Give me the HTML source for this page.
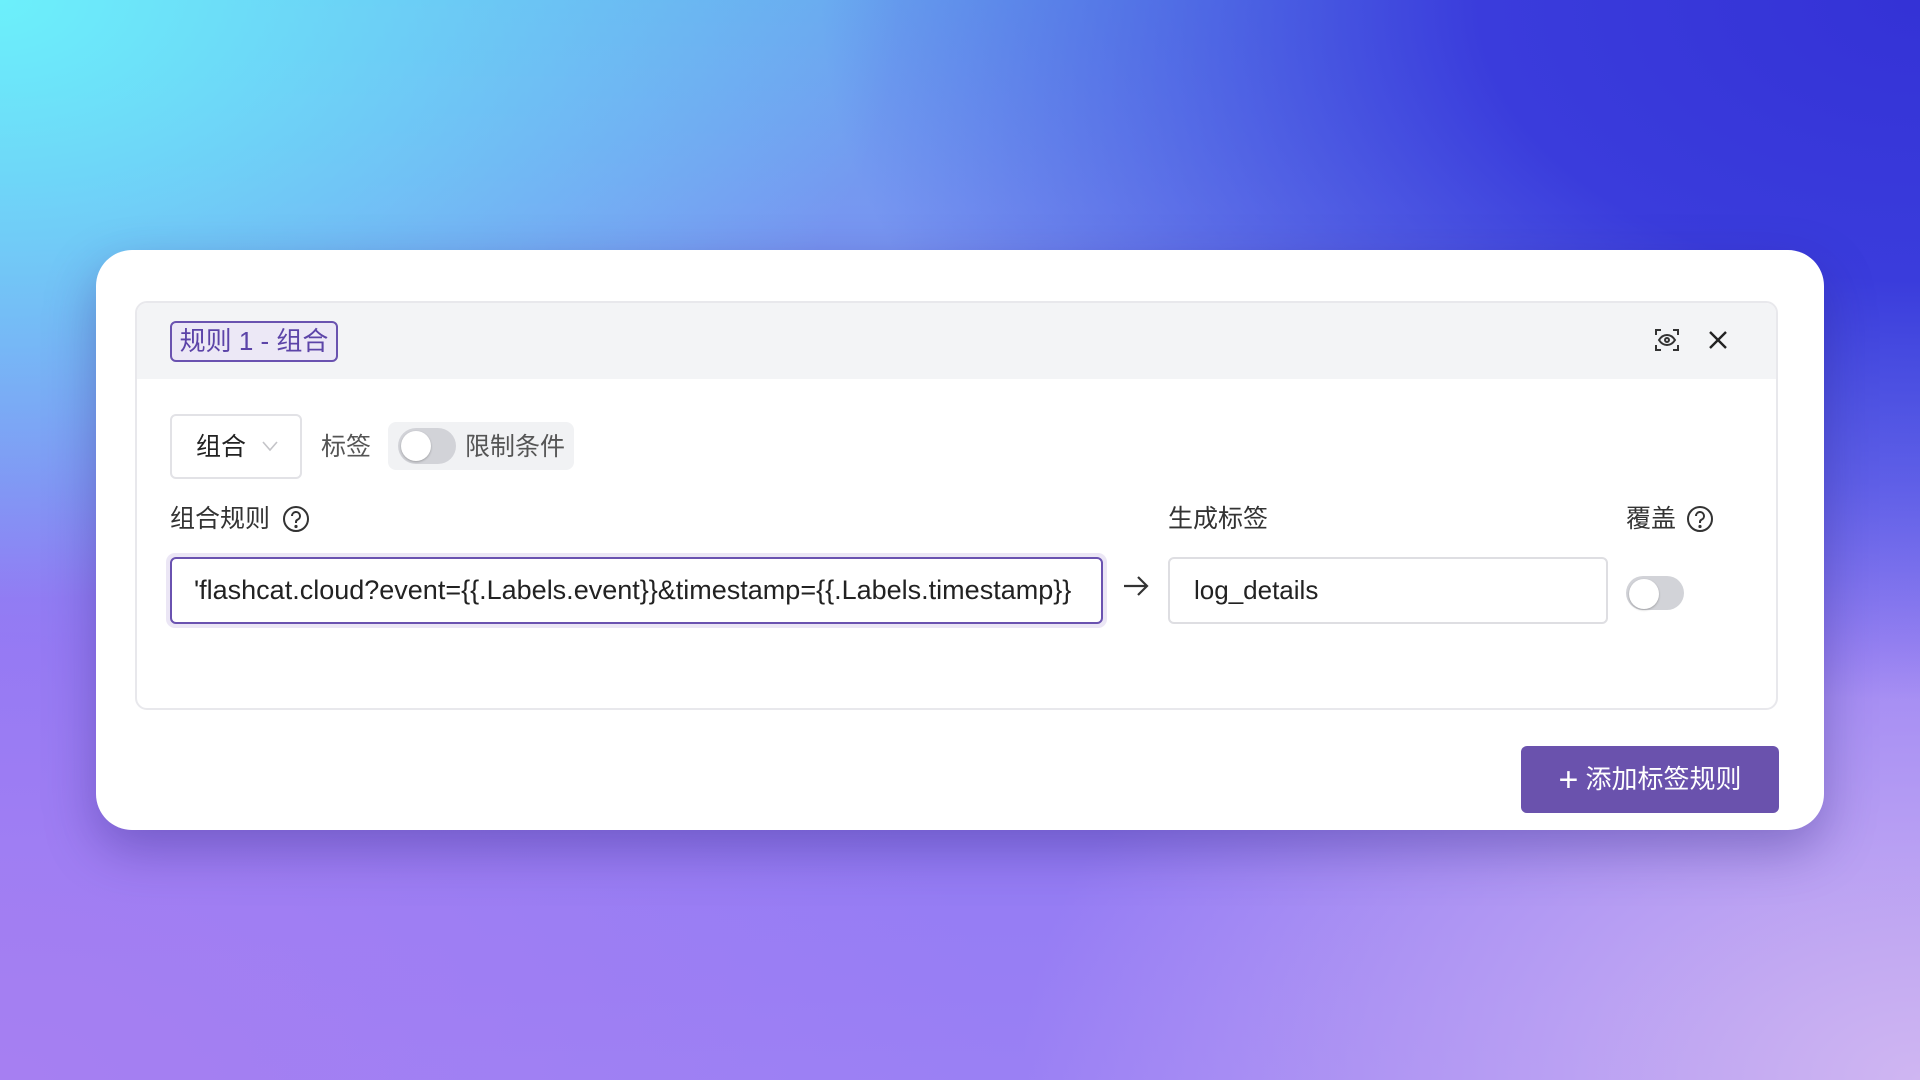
<!DOCTYPE html>
<html><head><meta charset="utf-8"><style>
*{box-sizing:border-box;margin:0;padding:0}
body{width:1920px;height:1080px;overflow:hidden;position:relative;font-family:"Liberation Sans","Noto Sans CJK SC",sans-serif;
background:
radial-gradient(ellipse 900px 600px at 0% 0%,#6cf0fb 0%,rgba(108,240,251,0) 100%),
radial-gradient(ellipse 1100px 700px at 100% 0%,#3432d6 0%,#3a3cdc 40%,rgba(58,60,220,0) 100%),
radial-gradient(ellipse 900px 600px at 100% 100%,#cfb6f2 0%,rgba(207,182,242,0) 100%),
radial-gradient(ellipse 1000px 600px at 0% 100%,#a67ff2 0%,rgba(166,127,242,0) 100%),
linear-gradient(180deg,#6aa6ef 0%,#8f78f4 60%,#9a80f4 100%);}
.card{position:absolute;left:96px;top:250px;width:1728px;height:580px;background:#fff;border-radius:36px;box-shadow:0 20px 50px rgba(40,30,120,.35)}
.panel{position:absolute;left:135px;top:301px;width:1643px;height:409px;border:2px solid #e8e8ec;border-radius:12px;background:#fff;overflow:hidden}
.head{position:absolute;left:0;top:0;right:0;height:76px;background:#f3f4f6}
.tag{position:absolute;left:170px;top:321px;width:168px;height:41px;border:2px solid #6a52b0;border-radius:6px;background:#ece8f6;color:#5c44a8;font-size:26px;line-height:37px;text-align:center}
.t{position:absolute;font-size:25px;color:#333;line-height:30px}
.sel{position:absolute;left:170px;top:414px;width:132px;height:65px;border:2px solid #e2e2e6;border-radius:6px}
.sw{position:absolute;width:58px;height:36px;border-radius:18px;background:#d2d3d8}
.sw::after{content:"";position:absolute;left:3px;top:3px;width:30px;height:30px;border-radius:50%;background:#fff;box-shadow:0 1px 2px rgba(0,0,0,.25)}
.inp{position:absolute;height:67px;border:2px solid #dedee2;border-radius:6px;font-size:25px;color:#222;line-height:63px;padding-left:24px;overflow:hidden;white-space:nowrap;background:#fff}
.btn{position:absolute;left:1521px;top:746px;width:258px;height:67px;background:#6a52ad;border-radius:6px;color:#fff;font-size:26px;line-height:67px;text-align:center}
</style></head><body>
<div class="card"></div>
<div class="panel"><div class="head"></div></div>
<div class="tag">规则 1 - 组合</div>
<svg style="position:absolute;left:1654px;top:327px" width="26" height="26" viewBox="0 0 26 26" fill="none" stroke="#333" stroke-width="2"><path d="M2 8V3h5M19 3h5v5M24 18v5h-5M7 23H2v-5"/><path d="M5 13c2.5-4 5-5 8-5s5.5 1 8 5c-2.5 4-5 5-8 5s-5.5-1-8-5z"/><circle cx="13" cy="13" r="2"/></svg>
<svg style="position:absolute;left:1708px;top:330px" width="20" height="20" viewBox="0 0 20 20" stroke="#222" stroke-width="2.4"><path d="M2 2L18 18M18 2L2 18"/></svg>
<div class="sel"><span class="t" style="left:24px;top:16px;color:#222">组合</span>
<svg style="position:absolute;left:90px;top:24px" width="16" height="12" viewBox="0 0 16 12" fill="none" stroke="#c4c4c8" stroke-width="1.6"><path d="M1 2l7 8 7-8"/></svg></div>
<span class="t" style="left:321px;top:432px;color:#555">标签</span>
<div style="position:absolute;left:388px;top:422px;width:186px;height:48px;background:#f1f2f4;border-radius:8px"></div>
<div class="sw" style="left:398px;top:428px"></div>
<span class="t" style="left:465px;top:432px;color:#555">限制条件</span>
<span class="t" style="left:170px;top:504px">组合规则</span>
<svg style="position:absolute;left:282px;top:505px" width="28" height="28" viewBox="0 0 28 28" fill="none" stroke="#333" stroke-width="2"><circle cx="14" cy="14" r="12"/><path d="M10 11a4 4 0 1 1 5.5 3.7c-1 .5-1.5 1.2-1.5 2.3v1"/><circle cx="14" cy="21.5" r=".6" fill="#333"/></svg>
<div style="position:absolute;left:166px;top:553px;width:941px;height:75px;border-radius:9px;background:#ebe6f5"></div>
<div class="inp" style="left:170px;top:557px;width:933px;border-color:#6a52b0;padding-left:22px;font-size:27px">'flashcat.cloud?event={{.Labels.event}}&amp;timestamp={{.Labels.timestamp}}</div>
<svg style="position:absolute;left:1122px;top:575px" width="28" height="22" viewBox="0 0 28 22" fill="none" stroke="#333" stroke-width="2.2"><path d="M2 11h23M16 2l9 9-9 9"/></svg>
<span class="t" style="left:1168px;top:504px">生成标签</span>
<div class="inp" style="left:1168px;top:557px;width:440px;font-size:26px">log_details</div>
<span class="t" style="left:1626px;top:504px">覆盖</span>
<svg style="position:absolute;left:1686px;top:505px" width="28" height="28" viewBox="0 0 28 28" fill="none" stroke="#333" stroke-width="2"><circle cx="14" cy="14" r="12"/><path d="M10 11a4 4 0 1 1 5.5 3.7c-1 .5-1.5 1.2-1.5 2.3v1"/><circle cx="14" cy="21.5" r=".6" fill="#333"/></svg>
<div class="sw" style="left:1626px;top:576px;height:34px"></div>
<div class="btn"><span style="font-size:34px;vertical-align:-3px;font-weight:300">+</span> 添加标签规则</div>
</body></html>
